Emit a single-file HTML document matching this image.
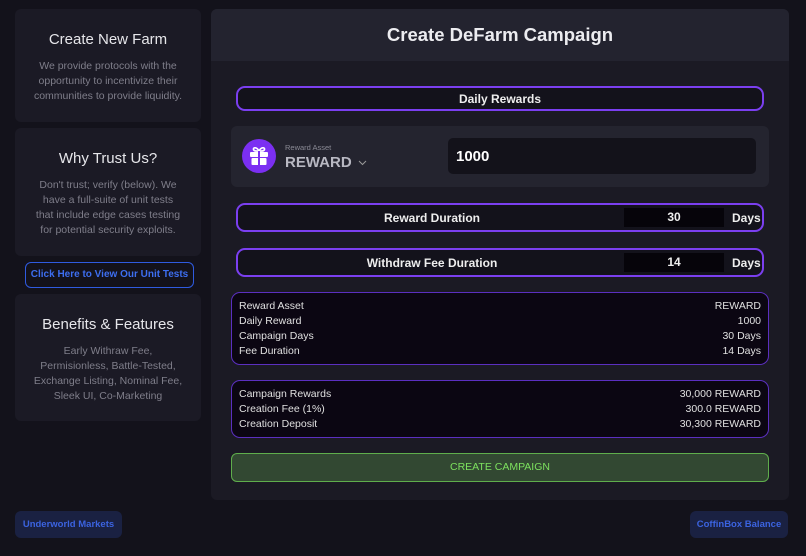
<!DOCTYPE html>
<html><head><meta charset="utf-8"><style>
*{margin:0;padding:0;box-sizing:border-box}
body{width:806px;height:556px;background:#13121b;font-family:"Liberation Sans",sans-serif;position:relative;overflow:hidden;color:#fff}
.a{position:absolute}
.card{background:#1b1a25;border-radius:6px;text-align:center}
.card h2{font-weight:normal;font-size:15px;color:#e6e6ea}
.card p{font-size:10.5px;color:#7f7e8a;line-height:15px}
.pill{border:2px solid #7b3ff0;border-radius:9px;background:#13121b;font-weight:bold;font-size:12px;color:#eee}
.box{border:1.5px solid #5b2fc0;border-radius:9px;background:#0b0612;font-size:10.5px;color:#e0e0e0;padding:6px 7px;line-height:15px}
.row{display:flex;justify-content:space-between}
.inp{background:#06040a}
.btm{background:#1a2142;border-radius:6px;color:#3b63e0;font-weight:bold;font-size:9.5px;text-align:center;line-height:27px}
</style></head><body>
<div class="a card" style="left:15px;top:9px;width:186px;height:113px"><h2 style="margin-top:22px">Create New Farm</h2><p style="margin-top:11px">We provide protocols with the<br>opportunity to incentivize their<br>communities to provide liquidity.</p></div>
<div class="a card" style="left:15px;top:128px;width:186px;height:128px"><h2 style="margin-top:22px">Why Trust Us?</h2><p style="margin-top:11px">Don't trust; verify (below). We<br>have a full-suite of unit tests<br>that include edge cases testing<br>for potential security exploits.</p></div>
<div class="a" style="left:25px;top:262px;width:169px;height:26px;border:1.5px solid #2f5be0;border-radius:6px;color:#3d6ef0;font-weight:bold;font-size:10px;text-align:center;line-height:23px">Click Here to View Our Unit Tests</div>
<div class="a card" style="left:15px;top:294px;width:186px;height:127px"><h2 style="margin-top:22px">Benefits &amp; Features</h2><p style="margin-top:11px">Early Withraw Fee,<br>Permisionless, Battle-Tested,<br>Exchange Listing, Nominal Fee,<br>Sleek UI, Co-Marketing</p></div>
<div class="a btm" style="left:15px;top:511px;width:107px;height:27px">Underworld Markets</div>
<div class="a btm" style="left:690px;top:511px;width:98px;height:27px">CoffinBox Balance</div>

<div class="a" style="left:211px;top:9px;width:578px;height:491px;background:#1b1a24;border-radius:6px;overflow:hidden">
<div style="height:52px;background:#23232f;text-align:center;line-height:52px;font-size:18.5px;font-weight:bold;color:#ececf0">Create DeFarm Campaign</div>
</div>
<div class="a pill" style="left:236px;top:86px;width:528px;height:25px;text-align:center;line-height:22px">Daily Rewards</div>
<div class="a" style="left:231px;top:126px;width:538px;height:61px;background:#24242f;border-radius:6px"></div>
<div class="a" style="left:242px;top:139px;width:34px;height:34px;border-radius:50%;background:#7b2ff2"></div>
<svg class="a" style="left:249px;top:145px" width="20" height="22" viewBox="0 0 20 22"><path d="M10 6C8 2 4 2 4.5 4.5 5 6.5 8 6 10 6 12 6 15 6.5 15.5 4.5 16 2 12 2 10 6Z" fill="none" stroke="#fff" stroke-width="1.6"/><rect x="1" y="7" width="18" height="5" rx="1" fill="#fff"/><rect x="2.5" y="13" width="15" height="7" rx="1" fill="#fff"/><rect x="9" y="6" width="2" height="15" fill="#7b2ff2"/></svg>
<div class="a" style="left:285px;top:143px;font-size:7.5px;color:#8a8a95">Reward Asset</div>
<div class="a" style="left:285px;top:154px;font-size:15px;font-weight:bold;color:#b8b8c2">REWARD <svg width="9" height="6" viewBox="0 0 9 6" style="margin-left:2px;vertical-align:middle"><path d="M1 1l3.5 3.5L8 1" stroke="#999" fill="none" stroke-width="1"/></svg></div>
<div class="a" style="left:448px;top:138px;width:308px;height:36px;background:#13121a;border-radius:5px;font-size:15px;font-weight:bold;line-height:38px;padding-left:8px">1000</div>
<div class="a pill" style="left:236px;top:203px;width:528px;height:29px;line-height:26px"><span class="a" style="left:0;width:388px;text-align:center">Reward Duration</span><span class="a inp" style="left:386px;top:3px;width:100px;height:19px;line-height:19px;text-align:center">30</span><span class="a" style="left:494px">Days</span></div>
<div class="a pill" style="left:236px;top:248px;width:528px;height:29px;line-height:26px"><span class="a" style="left:0;width:388px;text-align:center">Withdraw Fee Duration</span><span class="a inp" style="left:386px;top:3px;width:100px;height:19px;line-height:19px;text-align:center">14</span><span class="a" style="left:494px">Days</span></div>
<div class="a box" style="left:231px;top:292px;width:538px;height:73px"><div class="row"><span>Reward Asset</span><span>REWARD</span></div><div class="row"><span>Daily Reward</span><span>1000</span></div><div class="row"><span>Campaign Days</span><span>30 Days</span></div><div class="row"><span>Fee Duration</span><span>14 Days</span></div></div>
<div class="a box" style="left:231px;top:380px;width:538px;height:58px"><div class="row"><span>Campaign Rewards</span><span>30,000 REWARD</span></div><div class="row"><span>Creation Fee (1%)</span><span>300.0 REWARD</span></div><div class="row"><span>Creation Deposit</span><span>30,300 REWARD</span></div></div>
<div class="a" style="left:231px;top:453px;width:538px;height:29px;background:#324832;border:1.5px solid #5fae4c;border-radius:6px;color:#7ce05e;font-size:10.5px;text-align:center;line-height:27px">CREATE CAMPAIGN</div>
</body></html>
